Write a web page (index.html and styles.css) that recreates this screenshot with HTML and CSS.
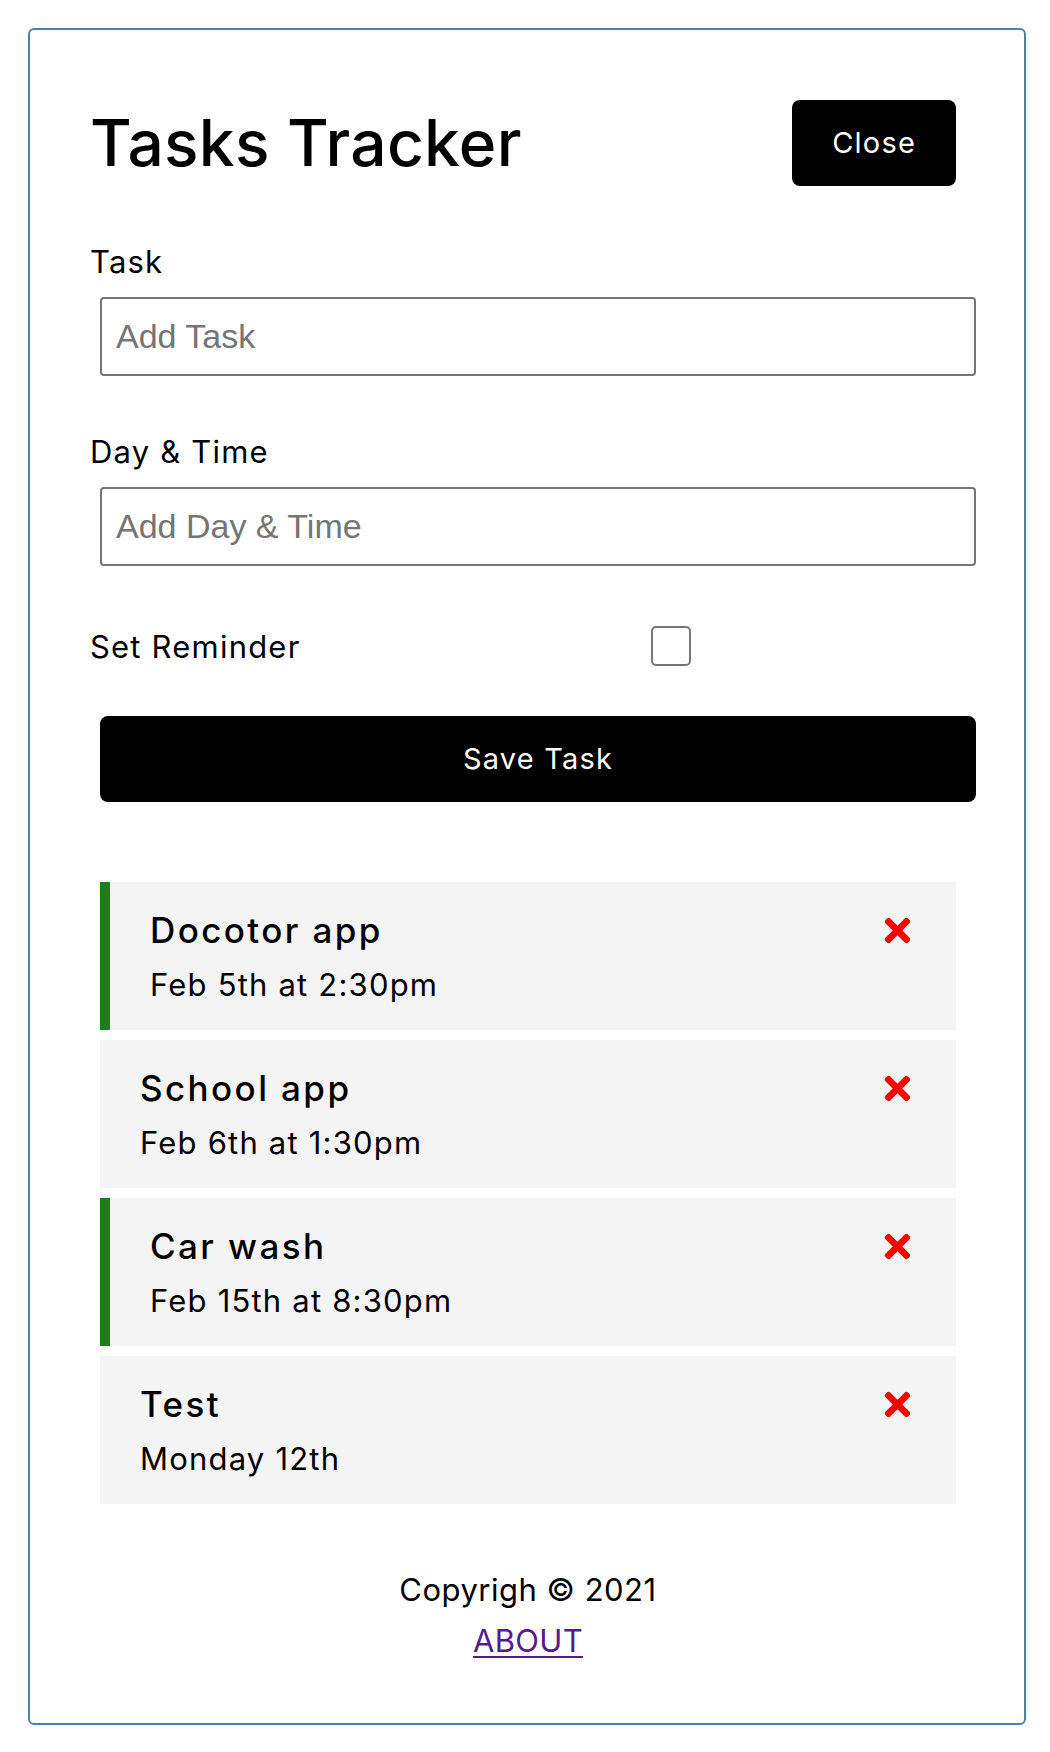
FILE: index.html
```html
<!DOCTYPE html>
<html lang="en">
<head>
<meta charset="utf-8">
<title>Tasks Tracker</title>
<link rel="stylesheet" href="styles.css">
</head>
<body>
<div class="container">
  <header class="header">
    <h1 class="title">Tasks Tracker</h1>
    <button class="btn btn-close" type="button">Close</button>
  </header>
  <form class="add-form">
    <div class="form-control">
      <label class="label">Task</label>
      <input class="text-input" type="text" placeholder="Add Task">
    </div>
    <div class="form-control">
      <label class="label">Day &amp; Time</label>
      <input class="text-input" type="text" placeholder="Add Day &amp; Time">
    </div>
    <div class="form-control-check">
      <label class="label check-label">Set Reminder</label>
      <div class="check-wrap"><input class="check" type="checkbox"></div>
    </div>
    <input class="btn btn-block" type="submit" value="Save Task">
  </form>
  <div class="tasks">
    <div class="task reminder">
      <h3 class="task-title"><span class="task-name">Docotor app</span><svg class="del" viewBox="0 0 352 512" aria-hidden="true"><path d="M242.72 256l100.07-100.07c12.28-12.28 12.28-32.19 0-44.48l-22.24-22.24c-12.28-12.28-32.19-12.28-44.48 0L176 189.28 75.93 89.21c-12.28-12.28-32.19-12.28-44.48 0L9.21 111.45c-12.28 12.28-12.28 32.19 0 44.48L109.28 256 9.21 356.07c-12.28 12.28-12.28 32.19 0 44.48l22.24 22.24c12.28 12.28 32.2 12.28 44.48 0L176 322.72l100.07 100.07c12.28 12.28 32.2 12.28 44.48 0l22.24-22.24c12.28-12.28 12.28-32.19 0-44.48L242.72 256z"/></svg></h3>
      <p class="task-day">Feb 5th at 2:30pm</p>
    </div>
    <div class="task">
      <h3 class="task-title"><span class="task-name">School app</span><svg class="del" viewBox="0 0 352 512" aria-hidden="true"><path d="M242.72 256l100.07-100.07c12.28-12.28 12.28-32.19 0-44.48l-22.24-22.24c-12.28-12.28-32.19-12.28-44.48 0L176 189.28 75.93 89.21c-12.28-12.28-32.19-12.28-44.48 0L9.21 111.45c-12.28 12.28-12.28 32.19 0 44.48L109.28 256 9.21 356.07c-12.28 12.28-12.28 32.19 0 44.48l22.24 22.24c12.28 12.28 32.2 12.28 44.48 0L176 322.72l100.07 100.07c12.28 12.28 32.2 12.28 44.48 0l22.24-22.24c12.28-12.28 12.28-32.19 0-44.48L242.72 256z"/></svg></h3>
      <p class="task-day">Feb 6th at 1:30pm</p>
    </div>
    <div class="task reminder">
      <h3 class="task-title"><span class="task-name">Car wash</span><svg class="del" viewBox="0 0 352 512" aria-hidden="true"><path d="M242.72 256l100.07-100.07c12.28-12.28 12.28-32.19 0-44.48l-22.24-22.24c-12.28-12.28-32.19-12.28-44.48 0L176 189.28 75.93 89.21c-12.28-12.28-32.19-12.28-44.48 0L9.21 111.45c-12.28 12.28-12.28 32.19 0 44.48L109.28 256 9.21 356.07c-12.28 12.28-12.28 32.19 0 44.48l22.24 22.24c12.28 12.28 32.2 12.28 44.48 0L176 322.72l100.07 100.07c12.28 12.28 32.2 12.28 44.48 0l22.24-22.24c12.28-12.28 12.28-32.19 0-44.48L242.72 256z"/></svg></h3>
      <p class="task-day">Feb 15th at 8:30pm</p>
    </div>
    <div class="task">
      <h3 class="task-title"><span class="task-name">Test</span><svg class="del" viewBox="0 0 352 512" aria-hidden="true"><path d="M242.72 256l100.07-100.07c12.28-12.28 12.28-32.19 0-44.48l-22.24-22.24c-12.28-12.28-32.19-12.28-44.48 0L176 189.28 75.93 89.21c-12.28-12.28-32.19-12.28-44.48 0L9.21 111.45c-12.28 12.28-12.28 32.19 0 44.48L109.28 256 9.21 356.07c-12.28 12.28-12.28 32.19 0 44.48l22.24 22.24c12.28 12.28 32.2 12.28 44.48 0L176 322.72l100.07 100.07c12.28 12.28 32.2 12.28 44.48 0l22.24-22.24c12.28-12.28 12.28-32.19 0-44.48L242.72 256z"/></svg></h3>
      <p class="task-day">Monday 12th</p>
    </div>
  </div>
  <footer class="footer">
    <p class="copy">Copyrigh &copy; 2021</p>
    <a class="about" href="#about">ABOUT</a>
  </footer>
</div>
</body>
</html>
```
FILE: styles.css
```css
* {
  box-sizing: border-box;
  margin: 0;
  padding: 0;
}

body {
  font-family: Inter, "Open Sans", sans-serif;
  font-size: 31px;
  letter-spacing: 1.2px;
  color: #000;
  background: #fff;
}

.container {
  margin: 28px 24px 0 28px;
  border: 2px solid steelblue;
  border-radius: 6px;
  padding: 60px 58px 57px 60px;
}

.header {
  display: flex;
  justify-content: space-between;
  align-items: center;
}

.title {
  font-size: 64px;
  font-weight: 500;
  line-height: 96px;
  letter-spacing: 0.3px;
}

.btn {
  display: inline-block;
  background: #000;
  color: #fff;
  border: none;
  border-radius: 8px;
  font-family: Inter, "Open Sans", sans-serif;
  font-size: 29px;
  letter-spacing: 1.2px;
  line-height: 44px;
  padding: 21px 40px;
  cursor: pointer;
}

.btn-close {
  margin: 10px;
}

.add-form {
  margin-top: 40px;
}

.form-control {
  display: flex;
  flex-direction: column;
  gap: 10px;
  margin-bottom: 50px;
}

.label {
  display: block;
  line-height: 51px;
}

.text-input {
  width: 100%;
  height: 79px;
  margin-left: 10px;
  padding: 0 14px;
  border: 2px solid #767676;
  border-radius: 4px;
  font-family: "Liberation Sans", Arial, sans-serif;
  font-size: 34px;
  letter-spacing: 0;
  color: #000;
  background: #fff;
}

.text-input::placeholder {
  color: #757575;
}

.form-control-check {
  display: flex;
  align-items: center;
  height: 60px;
  margin-bottom: 40px;
}

.check-label {
  flex: 1;
}

.check-wrap {
  flex: 2;
  margin: 0 10px;
  display: flex;
  justify-content: center;
}

.check {
  appearance: none;
  -webkit-appearance: none;
  width: 40px;
  height: 40px;
  border: 2px solid #767676;
  border-radius: 5px;
  background: #fff;
}

.btn-block {
  display: block;
  width: 100%;
  height: 86px;
  margin-left: 10px;
  padding: 0;
  text-align: center;
}

.tasks {
  margin-top: 80px;
  display: flex;
  flex-direction: column;
  gap: 10px;
}

.task {
  margin: 0 10px;
  background: #f4f4f4;
  padding: 20px 40px;
}

.task.reminder {
  border-left: 10px solid #1b7d1b;
}

.task-title {
  display: flex;
  justify-content: space-between;
  align-items: center;
  font-size: 35px;
  font-weight: 500;
  line-height: 57px;
  letter-spacing: 2.4px;
}

.del {
  width: 37px;
  height: 37px;
  fill: #f00;
  flex: none;
}

.task-day {
  line-height: 51px;
}

.footer {
  margin-top: 60px;
  text-align: center;
  line-height: 51px;
}

.copy {
  letter-spacing: 0.5px;
}

.about {
  color: #551a8b;
  letter-spacing: 0.3px;
  text-decoration: underline;
  text-decoration-thickness: 2px;
  text-underline-offset: 4px;
}
```
